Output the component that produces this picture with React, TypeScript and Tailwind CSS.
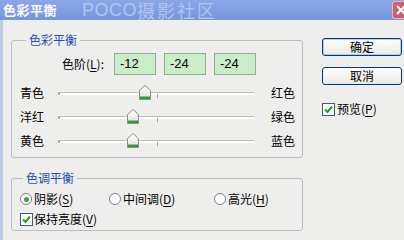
import React from 'react';

const sliders = [
  { left: '青色', right: '红色', value: -12 },
  { left: '洋红', right: '绿色', value: -24 },
  { left: '黄色', right: '蓝色', value: -24 },
];

const levels = ['-12', '-24', '-24'];

const TRACK_W = 197;

const U: React.FC<{ children: React.ReactNode }> = ({ children }) => (
  <span className="underline underline-offset-[2px]">{children}</span>
);

const Thumb: React.FC = () => (
  <svg width="12" height="15" viewBox="0 0 12 15">
    <defs>
      <linearGradient id="thumbFill" x1="0" y1="0" x2="0" y2="1">
        <stop offset="0" stopColor="#ffffff" />
        <stop offset="1" stopColor="#dfe0da" />
      </linearGradient>
    </defs>
    <path d="M0.5 5.5 L6 0.5 L11.5 5.5 V14.5 H0.5 Z" fill="url(#thumbFill)" stroke="#8c8e8e" />
    <rect x="1" y="11.5" width="10" height="2.5" fill="#2e9c3a" />
  </svg>
);

const CheckBox: React.FC = () => (
  <span className="flex h-[13px] w-[13px] shrink-0 items-center justify-center border border-[#3d5a7a] bg-white">
    <svg width="9" height="9" viewBox="0 0 9 9">
      <path d="M1 4.5 L3.5 7 L8 1.5" fill="none" stroke="#22a022" strokeWidth="2" />
    </svg>
  </span>
);

const Radio: React.FC<{ checked?: boolean }> = ({ checked }) => (
  <span className="flex h-[12px] w-[12px] shrink-0 items-center justify-center rounded-full border border-[#6f8296] bg-white">
    {checked && <span className="h-[5px] w-[5px] rounded-full bg-[#3ea043]" />}
  </span>
);

const Btn: React.FC<{ label: string; isDefault?: boolean }> = ({ label, isDefault }) => (
  <button
    className={`h-[18px] w-[80px] rounded-[3px] border border-[#003c74] bg-gradient-to-b from-white to-[#e9e8e2] text-[12px] leading-[16px] text-black ${
      isDefault ? 'shadow-[inset_0_0_0_1px_#b3cbf2]' : ''
    }`}
  >
    {label}
  </button>
);

const App: React.FC = () => {
  return (
    <div className="flex h-[240px] w-[404px] flex-col overflow-hidden bg-[#eeeeec] font-['Noto_Sans_CJK_SC',sans-serif] text-[12px] text-black">
      {/* Title bar */}
      <div className="flex h-[20px] shrink-0 items-center bg-gradient-to-b from-[#8ba7e8] to-[#7795dd]">
        <span className="ml-[3px] text-[13px] font-bold leading-[16px] tracking-[0.5px] text-white">色彩平衡</span>
        <span className="ml-[25px] font-['Liberation_Sans','Noto_Sans_CJK_SC',sans-serif] text-[18px] leading-[20px] tracking-[0.5px] text-[#b2c5ee]">
          POCO
        </span>
        <span className="text-[18px] leading-[20px] tracking-[2px] text-[#b2c5ee]">摄影社区</span>
        <div className="ml-auto flex h-[18px] w-[12px] items-center overflow-hidden rounded-l-[3px] border border-r-0 border-[#e9b8bd] bg-[#c9616c] pl-[2px]">
          <svg width="12" height="12" viewBox="0 0 12 12" className="shrink-0">
            <path d="M2 2 L10 10 M10 2 L2 10" stroke="#ffffff" strokeWidth="2" />
          </svg>
        </div>
      </div>

      {/* Body */}
      <div className="flex flex-1 border-l-[3px] border-[#bccaeb] pl-[8px] pt-[12px]">
        <div className="flex w-[292px] flex-col">
          <fieldset className="rounded-[3px] border border-[#bdbdbd] pb-[4px]">
            <legend className="ml-[14px] px-[3px] leading-[16px] text-[#1f4fb5]">色彩平衡</legend>
            <div className="mt-[5px] flex h-[22px] items-center">
              <span className="w-[102px] pr-[10px] text-right leading-[16px]">
                色阶(<U>L</U>):
              </span>
              <div className="flex gap-[8px]">
                {levels.map((v, i) => (
                  <div
                    key={i}
                    className="flex h-[22px] w-[42px] items-center border border-[#8fae8f] bg-[#c9ecc9] pl-[5px] font-['Liberation_Sans',sans-serif] text-[13px]"
                  >
                    {v}
                  </div>
                ))}
              </div>
            </div>
            <div className="mt-[6px] flex flex-col">
              {sliders.map((s) => {
                const center = TRACK_W / 2 + s.value * 0.985;
                return (
                  <div key={s.left} className="flex h-[24px] items-center">
                    <span className="w-[46px] pl-[8px] leading-[16px]">{s.left}</span>
                    <div className="relative h-[3px] w-[197px] rounded-full border-t border-[#bdbdb8] bg-white">
                      <span className="absolute left-0 top-[-1px] h-[3px] w-[2px] rounded-l-full bg-[#a3a39f]" />
                      <span className="absolute left-[99px] top-[1px] h-[4px] w-px bg-[#a3a39f]" />
                      <span className="absolute top-[-8px]" style={{ left: center - 6 }}>
                        <Thumb />
                      </span>
                    </div>
                    <span className="ml-[16px] leading-[16px]">{s.right}</span>
                  </div>
                );
              })}
            </div>
          </fieldset>

          <fieldset className="mt-[12px] rounded-[3px] border border-[#bdbdbd] pb-[2px]">
            <legend className="ml-[11px] px-[3px] leading-[16px] text-[#1f4fb5]">色调平衡</legend>
            <div className="mt-[4px] flex h-[18px] items-center pl-[8px]">
              <div className="flex w-[89px] items-center gap-[2px]">
                <Radio checked />
                <span className="leading-[16px]">
                  阴影(<U>S</U>)
                </span>
              </div>
              <div className="flex w-[105px] items-center gap-[2px]">
                <Radio />
                <span className="leading-[16px]">
                  中间调(<U>D</U>)
                </span>
              </div>
              <div className="flex items-center gap-[2px]">
                <Radio />
                <span className="leading-[16px]">
                  高光(<U>H</U>)
                </span>
              </div>
            </div>
            <div className="mt-[2px] flex h-[18px] items-center gap-[1px] pl-[8px]">
              <CheckBox />
              <span className="leading-[16px]">
                保持亮度(<U>V</U>)
              </span>
            </div>
          </fieldset>
        </div>

        <div className="ml-[19px] flex flex-col pt-[6px]">
          <Btn label="确定" isDefault />
          <div className="mt-[11px]">
            <Btn label="取消" />
          </div>
          <div className="mt-[16px] flex items-center gap-[2px]">
            <CheckBox />
            <span className="leading-[16px]">
              预览(<U>P</U>)
            </span>
          </div>
        </div>
      </div>
    </div>
  );
};

export default App;
